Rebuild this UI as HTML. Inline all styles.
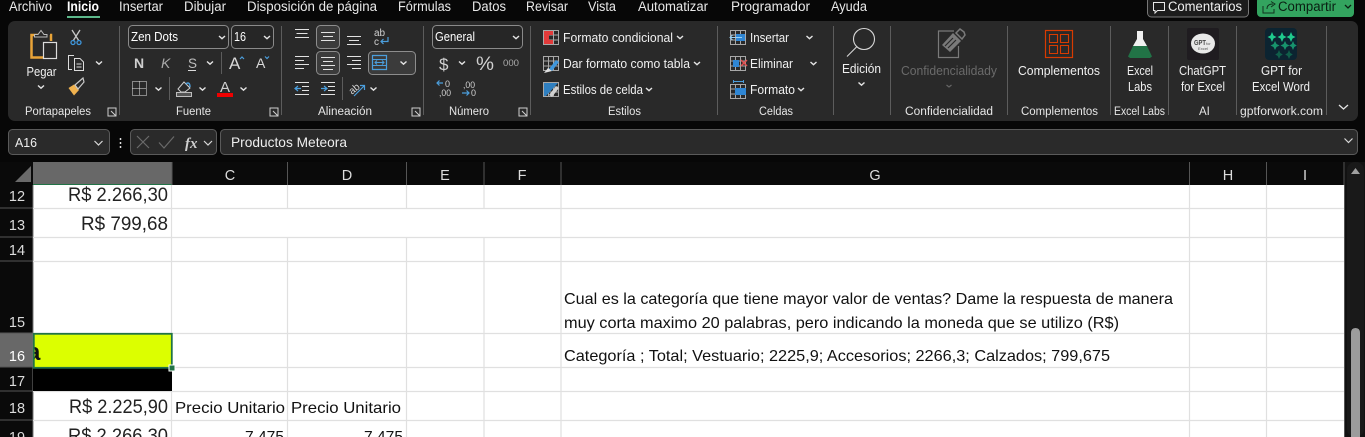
<!DOCTYPE html>
<html lang="es">
<head>
<meta charset="utf-8">
<title>Excel</title>
<style>
html,body{margin:0;padding:0;background:#070707;width:1365px;height:437px;overflow:hidden}
svg{display:block;position:absolute;left:0;top:0}
text{font-family:"Liberation Sans",sans-serif;white-space:pre}
.m{font-size:13.5px;fill:#e8e8e8}
.r{font-size:12.5px;fill:#f0f0f0}
.l{font-size:11.5px;fill:#e6e6e6}
.h{font-size:14.5px;fill:#dcdcdc;text-anchor:middle}
.n{font-size:14.5px;fill:#dcdcdc;text-anchor:middle}
.v{font-size:19px;fill:#222}
.c{font-size:16px;fill:#111}
.s{stroke:#e2e2e2;fill:none;stroke-width:1}
.grid{stroke:#e0e0e0;stroke-width:1.2;fill:none}
.sep{stroke:#5c5c5c;stroke-width:1}
</style>
</head>
<body>
<svg width="1365" height="437" viewBox="0 0 1365 437" xmlns="http://www.w3.org/2000/svg">
<defs>
<path id="ch" d="M-3 -1.5L0 1.2L3 -1.5" fill="none" stroke="#e4e4e4" stroke-width="1.4"/>
<path id="da" d="M-4 -2L0 2L4 -2" fill="none" stroke="#d8d8d8" stroke-width="1.2"/>
<g id="launch"><path d="M0 0H8V8H0Z" fill="none" stroke="#cfcfcf"/><path d="M3 3L8 8M5 8H8V5" fill="none" stroke="#cfcfcf"/></g>
<g id="tbl"><path d="M0.5 0.5H15.5V14.5H0.5ZM0.5 5H15.5M0.5 10H15.5M5.500 0.5V14.5M10.500 0.5V14.5" fill="none" stroke="#a8a8a8"/></g>
</defs>

<rect width="1365" height="437" fill="#070707"/>

<!-- Menu -->
<text class="m" lengthAdjust="spacingAndGlyphs" x="9" y="11" textLength="43">Archivo</text>
<text class="m" lengthAdjust="spacingAndGlyphs" x="67" y="11" textLength="32" style="font-weight:bold;fill:#fff">Inicio</text>
<rect x="67" y="16" width="33" height="2" fill="#5cb88a"/>
<text class="m" lengthAdjust="spacingAndGlyphs" x="119" y="11" textLength="44">Insertar</text>
<text class="m" lengthAdjust="spacingAndGlyphs" x="184" y="11" textLength="42">Dibujar</text>
<text class="m" lengthAdjust="spacingAndGlyphs" x="247" y="11" textLength="130">Disposición de página</text>
<text class="m" lengthAdjust="spacingAndGlyphs" x="398" y="11" textLength="53">Fórmulas</text>
<text class="m" lengthAdjust="spacingAndGlyphs" x="472" y="11" textLength="34">Datos</text>
<text class="m" lengthAdjust="spacingAndGlyphs" x="526" y="11" textLength="42">Revisar</text>
<text class="m" lengthAdjust="spacingAndGlyphs" x="588" y="11" textLength="28">Vista</text>
<text class="m" lengthAdjust="spacingAndGlyphs" x="638" y="11" textLength="70">Automatizar</text>
<text class="m" lengthAdjust="spacingAndGlyphs" x="731" y="11" textLength="79">Programador</text>
<text class="m" lengthAdjust="spacingAndGlyphs" x="831" y="11" textLength="36">Ayuda</text>

<rect x="1147.500" y="-3" width="101" height="20" rx="4" fill="#1c1c1c" stroke="#777"/>
<path d="M1153.500 2.500H1164.500V10.500H1157.500L1155 13V10.500H1153.500Z" fill="none" stroke="#e8e8e8"/>
<text class="m" lengthAdjust="spacingAndGlyphs" x="1168" y="11" textLength="74" style="fill:#f0f0f0">Comentarios</text>
<rect x="1257" y="-3" width="97" height="20" rx="4" fill="#33a45f"/>
<path d="M1263 6V13H1274V9M1267 9C1267 5 1270 4 1273 4M1271 1.500L1275 4L1271 7" fill="none" stroke="#10301d" stroke-width="1"/>
<text class="m" lengthAdjust="spacingAndGlyphs" x="1278" y="11" textLength="58" style="fill:#0a2013">Compartir</text>
<path d="M1345 5L1348 8L1351 5" fill="none" stroke="#0a2013" stroke-width="1.300"/>

<!-- Ribbon -->
<rect x="8" y="21" width="1350" height="100" rx="7" fill="#292929"/>
<g class="sep">
<path d="M119.500 26V115M281.500 26V115M423.500 26V115M530.500 26V115M717.500 26V115M833.500 26V115M890.500 26V115M1007.500 26V115M1110.500 26V115M1168.500 26V115M1236.500 26V115M1326.500 26V115"/>
</g>

<!-- Portapapeles -->
<path d="M38 35H31.500V57.500H43" fill="none" stroke="#e9a438" stroke-width="2.500"/>
<path d="M50 35H51V41" fill="none" stroke="#e9a438" stroke-width="2.500"/>
<path d="M34.500 37V34.500H38L41 30.500L44 34.500H47V37Z" fill="#292929" stroke="#bcbcbc"/>
<rect x="43.500" y="42.500" width="13" height="16" fill="#292929" stroke="#dcdcdc" stroke-width="1.200"/>
<text class="r" lengthAdjust="spacingAndGlyphs" x="26.500" y="76" textLength="30">Pegar</text>
<use href="#ch" x="41" y="87"/>
<path d="M72 30L79 41M80 30L73 41" fill="none" stroke="#c8c8c8" stroke-width="1.300"/>
<circle cx="73" cy="42.500" r="2" fill="none" stroke="#3f97dc" stroke-width="1.300"/>
<circle cx="79" cy="42.500" r="2" fill="none" stroke="#3f97dc" stroke-width="1.300"/>
<path d="M72 69.500H68.500V55.500H74" fill="none" stroke="#dcdcdc"/>
<path d="M74.500 58.500H80L83.500 62V70.500H74.500Z" fill="none" stroke="#dcdcdc"/>
<path d="M76.500 64H81.500M76.500 67H81.500" stroke="#dcdcdc"/>
<use href="#ch" x="99" y="63"/>
<path d="M68.500 88L74 84.500L79 90L74 95.500Z" fill="#f0b24f"/>
<path d="M75 85L83 78L84 82L78 89Z" fill="none" stroke="#c8c8c8" stroke-width="1.200"/>
<text class="l" lengthAdjust="spacingAndGlyphs" x="25" y="115" textLength="66">Portapapeles</text>
<use href="#launch" x="108" y="108"/>

<!-- Fuente -->
<rect x="128.500" y="25.500" width="100" height="23" rx="4" fill="#262626" stroke="#8a8a8a"/>
<text class="r" lengthAdjust="spacingAndGlyphs" x="131" y="41" textLength="47" style="fill:#fff">Zen Dots</text>
<use href="#ch" x="222" y="37.500"/>
<rect x="231.500" y="25.500" width="42" height="23" rx="4" fill="#262626" stroke="#8a8a8a"/>
<text class="r" lengthAdjust="spacingAndGlyphs" x="234" y="41" textLength="12" style="fill:#fff">16</text>
<use href="#ch" x="267" y="37.500"/>
<text x="134" y="68" style="font-size:14px;font-weight:bold;fill:#cfcfcf">N</text>
<text x="161" y="68" style="font-size:14px;font-style:italic;fill:#a8a8a8">K</text>
<text x="188" y="68" style="font-size:13.500px;fill:#bdbdbd">S</text>
<path d="M188 70.500H196" stroke="#dcdcdc"/>
<use href="#ch" x="210" y="63"/>
<path d="M221.500 52V74" stroke="#5c5c5c"/>
<text x="229" y="69" style="font-size:17px;fill:#d8d8d8">A</text>
<path d="M240 59L242 57L244 59" fill="none" stroke="#4b9edc" stroke-width="1.200"/>
<text x="256" y="68" style="font-size:14px;fill:#d8d8d8">A</text>
<path d="M265 56.500L267 58.500L269 56.500" fill="none" stroke="#4b9edc" stroke-width="1.200"/>
<path d="M132.500 81.500H146.500V95.500H132.500ZM139.500 81.500V95.500M132.500 88.500H146.500" fill="none" stroke="#e6e6e6" stroke-dasharray="1 1"/>
<use href="#ch" x="158.500" y="89"/>
<path d="M169.500 77V100" stroke="#5c5c5c"/>
<path d="M178 89L184 82L190 88L185 92H181Z" fill="none" stroke="#cfcfcf"/>
<path d="M186 84C188 82 190 83 190 87" fill="none" stroke="#4b9edc" stroke-width="1.400"/>
<rect x="176.500" y="92.500" width="15" height="4" fill="#555" stroke="#bdbdbd"/>
<use href="#ch" x="202.500" y="89"/>
<text x="220" y="92" style="font-size:15px;fill:#d0d0d0">A</text>
<rect x="217" y="93" width="16" height="4" fill="#f00000"/>
<use href="#ch" x="243.500" y="89"/>
<text class="l" lengthAdjust="spacingAndGlyphs" x="176" y="115" textLength="35">Fuente</text>
<use href="#launch" x="270" y="108"/>

<!-- Alineación -->
<path d="M295 29.500H309M296.500 33.500H307.500M295 37.500H309" class="s"/>
<rect x="316.500" y="25.500" width="23" height="23" rx="4" fill="#3b3b3b" stroke="#8d8d8d"/>
<path d="M321 32.500H335M323 36.500H333M321 40.500H335" class="s"/>
<path d="M347 36.500H361M349 40.500H359M347 44.500H361" class="s"/>
<text x="374" y="36" style="font-size:10px;fill:#d0d0d0">ab</text>
<text x="374" y="45" style="font-size:10px;fill:#d0d0d0">c</text>
<path d="M388 37V41.500H381M383.500 39L381 41.500L383.500 44" fill="none" stroke="#4b9edc" stroke-width="1.200"/>
<path d="M295 56.500H309M295 60.500H304M295 64.500H309M295 68.500H304" class="s"/>
<rect x="316.500" y="51.500" width="23" height="23" rx="4" fill="#3b3b3b" stroke="#8d8d8d"/>
<path d="M321 57.500H335M323 61.500H333M321 65.500H335M323 69.500H333" class="s"/>
<path d="M347 56.500H361M352 60.500H361M347 64.500H361M352 68.500H361" class="s"/>
<rect x="368.500" y="51.500" width="47" height="23" rx="4" fill="#3b3b3b" stroke="#8d8d8d"/>
<path d="M372.500 55.500H386.500V69.500H372.500Z" fill="none" stroke="#4b9edc" stroke-width="1.200"/>
<path d="M372.500 59.500H386.500M372.500 65.500H386.500M375 62.500H384M377 60.500L375 62.500L377 64.500M382 60.500L384 62.500L382 64.500" fill="none" stroke="#4b9edc" stroke-width="1"/>
<use href="#ch" x="403.500" y="63"/>
<path d="M295 82.500H309M302 86.500H309M302 90.500H309M295 94.500H309" class="s"/>
<path d="M295 88.500H301M298 86L295 88.500L298 91" fill="none" stroke="#4b9edc" stroke-width="1.200"/>
<path d="M321 82.500H335M328 86.500H335M328 90.500H335M321 94.500H335" class="s"/>
<path d="M321 88.500H327M324 86L327 88.500L324 91" fill="none" stroke="#4b9edc" stroke-width="1.200"/>
<path d="M342.500 77V100" stroke="#5c5c5c"/>
<text x="348" y="92" transform="rotate(-40 354 88)" style="font-size:10px;fill:#d0d0d0">ab</text>
<path d="M354 96L364 86M360 85.500H364.500V90" fill="none" stroke="#4b9edc" stroke-width="1.200"/>
<use href="#ch" x="373.500" y="89"/>
<text class="l" lengthAdjust="spacingAndGlyphs" x="318" y="115" textLength="54">Alineación</text>
<use href="#launch" x="412" y="108"/>

<!-- Número -->
<rect x="432.500" y="25.500" width="90" height="23" rx="4" fill="#262626" stroke="#8a8a8a"/>
<text class="r" lengthAdjust="spacingAndGlyphs" x="435" y="41" textLength="40" style="fill:#fff">General</text>
<use href="#ch" x="516" y="37.500"/>
<text x="439" y="70" style="font-size:17px;fill:#d0d0d0">$</text>
<use href="#ch" x="462" y="63"/>
<text x="476" y="70" lengthAdjust="spacingAndGlyphs" style="font-size:19px;fill:#d0d0d0" textLength="18">%</text>
<text x="503" y="66" lengthAdjust="spacingAndGlyphs" style="font-size:9px;fill:#aaa" textLength="16">000</text>
<path d="M443 83H437M439.500 80.500L437 83L439.500 85.500" fill="none" stroke="#4b9edc" stroke-width="1.200"/>
<text x="445" y="87" style="font-size:9px;fill:#d0d0d0">0</text>
<text x="439" y="96" lengthAdjust="spacingAndGlyphs" style="font-size:9px;fill:#d0d0d0" textLength="12">,00</text>
<text x="463" y="88" lengthAdjust="spacingAndGlyphs" style="font-size:9px;fill:#d0d0d0" textLength="12">,00</text>
<path d="M462 93H469M466.500 90.500L469 93L466.500 95.500" fill="none" stroke="#4b9edc" stroke-width="1.200"/>
<text x="471" y="96" style="font-size:9px;fill:#d0d0d0">0</text>
<text class="l" lengthAdjust="spacingAndGlyphs" x="449" y="115" textLength="40">Número</text>
<use href="#launch" x="519" y="108"/>

<!-- Estilos -->
<use href="#tbl" x="543" y="30"/>
<path d="M544 31H549V44H544ZM549 40H553V44H549ZM549 31H553V35H549Z" fill="#e23a3a"/>
<text class="r" lengthAdjust="spacingAndGlyphs" x="563" y="42" textLength="110">Formato condicional</text>
<use href="#ch" x="680" y="37.500"/>
<use href="#tbl" x="543" y="56"/>
<path d="M549 69L556 60L559 62L552 71Z" fill="#3f97dc"/>
<path d="M544 73L548 68L552 71Z" fill="#e0e0e0"/>
<text class="r" lengthAdjust="spacingAndGlyphs" x="563" y="68" textLength="127">Dar formato como tabla</text>
<use href="#ch" x="697" y="63.500"/>
<use href="#tbl" x="543" y="82"/>
<path d="M544 83H558L546 96H544Z" fill="#2f7fc0"/>
<path d="M549 95L556 86L559 88L552 97Z" fill="#d0d0d0"/>
<text class="r" lengthAdjust="spacingAndGlyphs" x="563" y="94" textLength="80">Estilos de celda</text>
<use href="#ch" x="649" y="89.500"/>
<text class="l" lengthAdjust="spacingAndGlyphs" x="608" y="115" textLength="33">Estilos</text>

<!-- Celdas -->
<use href="#tbl" x="730" y="30"/>
<rect x="736" y="34" width="9" height="7" fill="#2f86d4"/>
<path d="M730 37.500H742M732.500 35L730 37.500L732.500 40" fill="none" stroke="#9ad0f2" stroke-width="1"/>
<text class="r" lengthAdjust="spacingAndGlyphs" x="750" y="42" textLength="39">Insertar</text>
<use href="#ch" x="809.500" y="37.500"/>
<use href="#tbl" x="730" y="56"/>
<rect x="733" y="60" width="6" height="7" fill="#2f86d4"/>
<path d="M741 60L747 66M747 60L741 66" stroke="#e25050" stroke-width="1.500"/>
<text class="r" lengthAdjust="spacingAndGlyphs" x="750" y="68" textLength="43">Eliminar</text>
<use href="#ch" x="813.500" y="63.500"/>
<use href="#tbl" x="730" y="84"/>
<rect x="735" y="88" width="11" height="7" fill="#2f86d4"/>
<path d="M733.500 81.500H743.500M733.500 80V83M743.500 80V83" stroke="#4b9edc"/>
<text class="r" lengthAdjust="spacingAndGlyphs" x="750" y="94" textLength="45">Formato</text>
<use href="#ch" x="801" y="89.500"/>
<text class="l" lengthAdjust="spacingAndGlyphs" x="759" y="115" textLength="34">Celdas</text>

<!-- Edición -->
<circle cx="864" cy="39" r="10.500" fill="none" stroke="#d8d8d8" stroke-width="1.100"/>
<path d="M856.500 47L847 56.500" stroke="#d8d8d8" stroke-width="1.100"/>
<text class="r" lengthAdjust="spacingAndGlyphs" x="842" y="73" textLength="39">Edición</text>
<use href="#ch" x="861.500" y="84"/>

<!-- Confidencialidad -->
<path d="M954 31H938.500V57.500H958.500V46" fill="none" stroke="#7a7a7a" stroke-width="1.200"/>
<path d="M942 45L953 33L961 41L950 52Z" fill="#7a7a7a"/>
<path d="M945 46L953 38M948 48L956 40" stroke="#292929" stroke-width="1.200"/>
<path d="M956 33L960 29L964 32L965 35L962 39Z" fill="#292929" stroke="#7a7a7a" stroke-width="1.500"/>
<text class="r" lengthAdjust="spacingAndGlyphs" x="901" y="75" textLength="96" style="fill:#6a6a6a">Confidencialidady</text>
<path d="M946.500 85L949 87L951.500 85" fill="none" stroke="#666" stroke-width="1.200"/>
<text class="l" lengthAdjust="spacingAndGlyphs" x="905" y="115" textLength="88">Confidencialidad</text>

<!-- Complementos -->
<rect x="1045.500" y="30.500" width="27" height="27" fill="none" stroke="#d83b01" stroke-width="1.200"/>
<path d="M1049.500 34.500H1057.500V42.500H1049.500ZM1060.500 34.500H1068.500V42.500H1060.500ZM1049.500 45.500H1057.500V53.500H1049.500ZM1060.500 45.500H1068.500V53.500H1060.500Z" fill="none" stroke="#d83b01" stroke-width="1.100"/>
<text class="r" lengthAdjust="spacingAndGlyphs" x="1018" y="75" textLength="82">Complementos</text>
<text class="l" lengthAdjust="spacingAndGlyphs" x="1021" y="115" textLength="77">Complementos</text>

<!-- Excel Labs -->
<path d="M1137 31H1143V39L1147 46H1133L1137 39Z" fill="#f0f0f0"/>
<path d="M1133 46H1147L1152 56.500L1150 58H1130L1128 56.500Z" fill="#217346"/>
<text class="r" lengthAdjust="spacingAndGlyphs" x="1127" y="75" textLength="26">Excel</text>
<text class="r" lengthAdjust="spacingAndGlyphs" x="1128" y="91" textLength="24">Labs</text>
<text class="l" lengthAdjust="spacingAndGlyphs" x="1114" y="115" textLength="51">Excel Labs</text>

<!-- ChatGPT -->
<rect x="1187" y="28" width="32" height="32" rx="2" fill="#1f1c20"/>
<ellipse cx="1203" cy="43.500" rx="12" ry="10" fill="#e8e8e8"/>
<text x="1194" y="45" lengthAdjust="spacingAndGlyphs" style="font-size:7px;font-weight:bold;fill:#444" textLength="12">GPT</text>
<text x="1206" y="45" style="font-size:4px;fill:#555">for</text>
<text x="1198" y="50" lengthAdjust="spacingAndGlyphs" style="font-size:4px;fill:#555" textLength="10">Excel</text>
<text class="r" lengthAdjust="spacingAndGlyphs" x="1179" y="75" textLength="47">ChatGPT</text>
<text class="r" lengthAdjust="spacingAndGlyphs" x="1181" y="91" textLength="44">for Excel</text>
<text class="l" x="1199" y="115">AI</text>

<!-- GPT for Excel Word -->
<rect x="1265" y="28" width="32" height="32" rx="4" fill="#0c2431"/>
<g fill="#1fcb8e">
<path d="M1272 32l1.500 3.500 3 1.500-3 1.500-1.500 3.500-1.500-3.500-3-1.500 3-1.500z"/>
<path d="M1282 32l1.500 3.500 3 1.500-3 1.500-1.500 3.500-1.500-3.500-3-1.500 3-1.500z"/>
<path d="M1291 32l1.500 3.500 3 1.500-3 1.500-1.500 3.500-1.500-3.500-3-1.500 3-1.500z"/>
</g>
<g fill="#17936c">
<path d="M1275 41l1.500 3 3 1.500-3 1.500-1.500 3-1.500-3-3-1.500 3-1.500z"/>
<path d="M1285 41l1.500 3 3 1.500-3 1.500-1.500 3-1.500-3-3-1.500 3-1.500z"/>
<path d="M1293 41l1.300 3 2.500 1.500-2.500 1.500-1.300 3-1.300-3-2.500-1.500 2.500-1.500z"/>
</g>
<g fill="#10604a">
<path d="M1279 50l1.300 3 2.500 1.500-2.500 1.500-1.300 3-1.300-3-2.500-1.500 2.500-1.500z"/>
<path d="M1289 50l1.300 3 2.500 1.500-2.500 1.500-1.300 3-1.300-3-2.500-1.500 2.500-1.500z"/>
</g>
<text class="r" lengthAdjust="spacingAndGlyphs" x="1261" y="75" textLength="41">GPT for</text>
<text class="r" lengthAdjust="spacingAndGlyphs" x="1252" y="91" textLength="58">Excel Word</text>
<text class="l" lengthAdjust="spacingAndGlyphs" x="1240" y="115" textLength="83">gptforwork.com</text>
<path d="M1339 105L1343.500 109L1348 105" fill="none" stroke="#e4e4e4" stroke-width="1.300"/>

<!-- Formula bar -->
<rect x="8.500" y="129.500" width="101" height="25" rx="4" fill="#2a2a2a" stroke="#5a5a5a"/>
<text class="r" lengthAdjust="spacingAndGlyphs" x="15" y="147" textLength="22" style="fill:#eee">A16</text>
<use href="#da" x="98.500" y="143"/>
<path d="M120.500 138V140M120.500 142V144M120.500 146V148" stroke="#ddd" stroke-width="1.500"/>
<rect x="130.500" y="129.500" width="86" height="25" rx="4" fill="#2a2a2a" stroke="#5a5a5a"/>
<path d="M137 136L149 148M149 136L137 148" stroke="#6a6a6a" stroke-width="1.200"/>
<path d="M159 142.500L164 148L174 136.500" fill="none" stroke="#6a6a6a" stroke-width="1.200"/>
<text x="185" y="148" style="font-family:'Liberation Serif',serif;font-style:italic;font-weight:bold;font-size:15px;fill:#cfcfcf">fx</text>
<use href="#da" x="208" y="143"/>
<rect x="220.500" y="129.500" width="1137" height="25" rx="4" fill="#2a2a2a" stroke="#5a5a5a"/>
<text lengthAdjust="spacingAndGlyphs" x="231" y="147" textLength="116" style="font-size:14px;fill:#eee">Productos Meteora</text>
<use href="#da" x="1348.500" y="140.500"/>

<!-- Sheet -->
<rect x="0" y="162" width="1345" height="23" fill="#0a0a0a"/>
<rect x="0" y="162" width="33" height="275" fill="#0a0a0a"/>
<path d="M15 182L31 166V182Z" fill="#6a6a6a"/>
<rect x="33" y="162" width="139" height="23" fill="#686868"/>
<rect x="33" y="184" width="139" height="1.500" fill="#217346"/>
<path d="M172 162V185M287.500 162V185M406.500 162V185M484 162V185M561 162V185M1189.500 162V185M1266.500 162V185M1344 162V185" stroke="#555" stroke-width="1"/>
<text class="h" x="230" y="180">C</text>
<text class="h" x="347" y="180">D</text>
<text class="h" x="445" y="180">E</text>
<text class="h" x="522" y="180">F</text>
<text class="h" x="875" y="180">G</text>
<text class="h" x="1228" y="180">H</text>
<text class="h" x="1305" y="180">I</text>

<rect x="33" y="185" width="1311" height="252" fill="#fff"/>

<!-- Row headers -->
<rect x="0" y="333" width="33" height="34" fill="#686868"/>
<path d="M0 208H33M0 237H33M0 261H33M0 333H33M0 367H33M0 391H33M0 420H33" stroke="#555" stroke-width="1"/>
<rect x="32.500" y="185" width="1" height="252" fill="#777"/>
<text class="n" x="17" y="201">12</text>
<text class="n" x="17" y="230">13</text>
<text class="n" x="17" y="255">14</text>
<text class="n" x="17" y="327">15</text>
<text class="n" x="17" y="361" style="fill:#fff">16</text>
<text class="n" x="17" y="386">17</text>
<text class="n" x="17" y="413">18</text>
<text class="n" x="17" y="442">19</text>

<!-- Grid lines -->
<g class="grid">
<path d="M33 208.500H1344M33 237.500H1344M33 261.500H1344M33 333.500H1344M33 367.500H1344M33 391.500H1344M33 420.500H1344"/>
<path d="M171.500 185V437M287.500 185V208M287.500 237V437M406.500 185V208M406.500 237V437M484 185V208M484 237V437M561 185V437M1189.500 185V437M1266.500 185V437"/>
</g>
<rect x="1344" y="185" width="1" height="252" fill="#555"/>

<!-- Selected cell + fills -->
<rect x="34" y="334" width="137.500" height="33" fill="#dcff00"/>
<rect x="33" y="368" width="139" height="23" fill="#000"/>
<svg x="34" y="334" width="138" height="33" viewBox="34 334 138 33">
<text x="27" y="360" style="font-size:24px;font-weight:bold;fill:#111">a</text>
</svg>
<rect x="33.800" y="333.800" width="138" height="34" fill="none" stroke="#217346" stroke-width="1.800"/>
<rect x="169" y="365" width="6" height="6" fill="#217346" stroke="#fff" stroke-width="1"/>

<!-- Cell text -->
<text class="v" lengthAdjust="spacingAndGlyphs" x="68" y="201" textLength="100">R$ 2.266,30</text>
<text class="v" lengthAdjust="spacingAndGlyphs" x="81" y="230" textLength="87">R$ 799,68</text>
<text class="v" lengthAdjust="spacingAndGlyphs" x="69" y="413" textLength="99">R$ 2.225,90</text>
<text class="v" lengthAdjust="spacingAndGlyphs" x="68" y="442" textLength="100">R$ 2.266,30</text>
<text class="c" lengthAdjust="spacingAndGlyphs" x="175" y="413" textLength="110">Precio Unitario</text>
<text class="c" lengthAdjust="spacingAndGlyphs" x="291" y="413" textLength="110">Precio Unitario</text>
<text class="c" lengthAdjust="spacingAndGlyphs" x="245" y="442" textLength="39">7,475</text>
<text class="c" lengthAdjust="spacingAndGlyphs" x="364" y="442" textLength="39">7,475</text>
<text class="c" lengthAdjust="spacingAndGlyphs" x="564" y="304" textLength="609">Cual es la categoría que tiene mayor valor de ventas? Dame la respuesta de manera</text>
<text class="c" lengthAdjust="spacingAndGlyphs" x="564" y="328" textLength="555">muy corta maximo 20 palabras, pero indicando la moneda que se utilizo (R$)</text>
<text class="c" lengthAdjust="spacingAndGlyphs" x="564" y="361" textLength="546">Categoría ; Total; Vestuario; 2225,9; Accesorios; 2266,3; Calzados; 799,675</text>

<!-- Scrollbar -->
<rect x="1345" y="162" width="20" height="275" fill="#121212"/>
<rect x="1347" y="162" width="17" height="275" rx="8" fill="#191919"/>
<path d="M1351 174L1355.500 168L1360 174Z" fill="#a0a0a0"/>
<path d="M1351 437V333Q1351 328 1355.500 328Q1360 328 1360 333V437Z" fill="#9c9c9c"/>
</svg>
</body>
</html>
